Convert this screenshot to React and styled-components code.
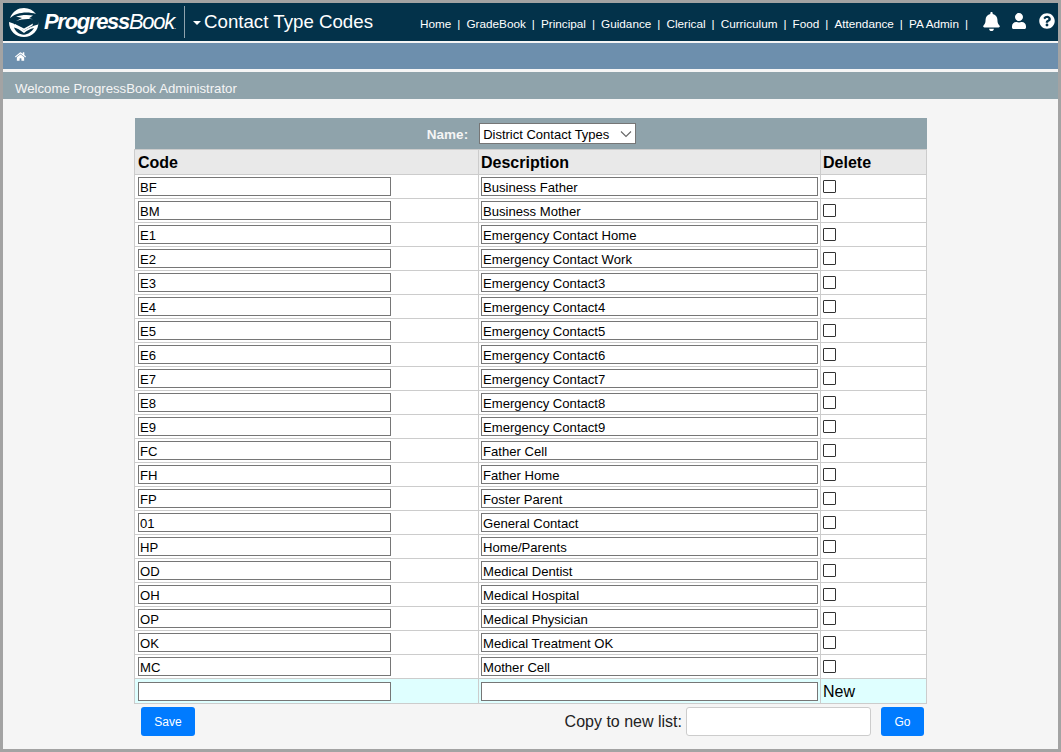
import React from "react";
import styled, { createGlobalStyle } from "styled-components";
import { FaHome, FaBell, FaUser, FaQuestionCircle } from "react-icons/fa";

const Global = createGlobalStyle`
  html, body { margin: 0; padding: 0; }
  body { font-family: "Liberation Sans", Arial, sans-serif; background: #a3a3a3; }
`;

const Frame = styled.div`
  width: 1055px;
  height: 746px;
  border: solid #a3a3a3;
  border-width: 3px;
  background: #f5f5f5;
  display: flex;
  flex-direction: column;
  overflow: hidden;
`;

const TopBar = styled.header`
  height: 38px;
  flex: none;
  background: #03324a;
  display: flex;
  align-items: center;
  color: #fff;
`;

const Logo = styled.div`
  width: 182px;
  flex: none;
  display: flex;
  align-items: center;
  padding-left: 5px;
  box-sizing: border-box;
  border-right: 1px solid #8fa3ae;
  height: 32px;
`;

const Wordmark = styled.span`
  font-size: 22px;
  font-style: italic;
  letter-spacing: -1.3px;
  margin-left: 5px;
  color: #fff;
  white-space: nowrap;
  b { font-weight: 700; }
  span { font-weight: 400; }
  i { font-size: 8px; letter-spacing: 0; font-style: normal; }
`;

const PageTitle = styled.div`
  display: flex;
  align-items: center;
  margin-left: 7px;
  width: 222px;
  flex: none;
  font-size: 18.7px;
  white-space: nowrap;
`;

const Caret = styled.span`
  width: 0;
  height: 0;
  border-left: 4px solid transparent;
  border-right: 4px solid transparent;
  border-top: 4px solid #fff;
  margin: 2px 3px 0 1px;
`;

const Nav = styled.nav`
  display: flex;
  align-items: center;
  font-size: 11.75px;
  flex: none;
  white-space: nowrap;
  margin-top: 3px;
`;

const NavLink = styled.a`
  color: #fff;
  padding: 0 6px;
  display: flex;
  align-items: center;
  &::after {
    content: "|";
    margin-left: 6px;
    margin-right: -6px;
  }
`;

const Icons = styled.div`
  display: flex;
  align-items: center;
  margin-left: 14px;
  gap: 10px;
  margin-top: -2px;
  svg { display: block; }
  svg:last-child { margin-left: 2px; }
`;

const Crumb = styled.div`
  margin-top: 2px;
  height: 26px;
  flex: none;
  background: #6d8fad;
  color: #fff;
  display: flex;
  align-items: center;
  padding-left: 12px;
  font-size: 11px;
`;

const Welcome = styled.div`
  margin-top: 3px;
  height: 27px;
  flex: none;
  background: #8fa3ab;
  color: #f5f5f5;
  font-size: 13.2px;
  display: flex;
  align-items: center;
  padding: 5px 0 0 12px;
  box-sizing: border-box;
`;

const Main = styled.main`
  width: 792px;
  margin: 19px 0 0 132px;
`;

const Table = styled.table`
  width: 792px;
  margin-left: -1px;
  table-layout: fixed;
  border-collapse: collapse;
  font-size: 13px;
`;

const NameRow = styled.th`
  height: 31px;
  padding: 0;
  background: #8fa3ab;
  color: #f5f5f5;
  text-align: center;
  font-size: 13.5px;
  font-weight: 700;
  border-bottom: 1px solid #ccc;
`;

const NameInner = styled.div`
  display: flex;
  align-items: center;
  justify-content: center;
  gap: 11px;
  padding-left: 2px;
`;

const NameLabel = styled.span`
  padding-top: 1px;
`;

const Select = styled.select`
  appearance: none;
  box-sizing: border-box;
  width: 157px;
  height: 21px;
  font-family: "Liberation Sans", Arial, sans-serif;
  font-size: 13px;
  font-weight: 400;
  color: #000;
  border: 1px solid #767676;
  border-radius: 0;
  padding: 1px 0 0 3px;
  background: #fff url("data:image/svg+xml,%3Csvg xmlns='http://www.w3.org/2000/svg' width='12' height='8'%3E%3Cpath d='M1 1.500l5 5 5-5' fill='none' stroke='%23666' stroke-width='1.100'/%3E%3C/svg%3E") no-repeat right 3px center;
`;

const HeadCell = styled.th`
  height: 25px;
  padding: 2px 0 0 ${(p) => (p.$first ? 3 : 2)}px;
  background: #e9e9e9;
  border: 1px solid #ccc;
  text-align: left;
  font-size: 16px;
  font-weight: 700;
  color: #000;
  box-sizing: border-box;
`;

const Cell = styled.td`
  height: ${(p) => (p.$new ? 25 : 24)}px;
  padding: ${(p) => (p.$first ? "0 2px 0 3px" : "0 2px")};
  box-sizing: border-box;
  border: 1px solid #ccc;
  background: ${(p) => (p.$new ? "#dfffff" : "#fff")};
  font-size: 16px;
  vertical-align: middle;
  line-height: 1;
`;

const NewLabel = styled.span`
  display: block;
  padding-top: 2px;
`;

const TextBox = styled.input.attrs({ type: "text" })`
  display: block;
  box-sizing: border-box;
  width: ${(p) => p.$w}px;
  height: 19px;
  margin: 0;
  padding: 1px 1px 0;
  border: 1px solid #767676;
  border-radius: 0;
  background: #fff;
  color: #000;
  font-family: "Liberation Sans", Arial, sans-serif;
  font-size: 13.1px;
`;

const Check = styled.input.attrs({ type: "checkbox" })`
  display: block;
  appearance: none;
  box-sizing: border-box;
  width: 13px;
  height: 13px;
  margin: 0;
  background: #fff;
  border: 1px solid #333;
  border-radius: 1px;
`;

const Footer = styled.div`
  display: flex;
  align-items: center;
  height: 29px;
  margin-top: 3px;
  padding: 0 3px 0 6px;
`;

const Button = styled.button`
  height: 29px;
  width: ${(p) => p.$w}px;
  background: #007bff;
  color: #fff;
  border: 0;
  border-radius: 3px;
  font-family: "Liberation Sans", Arial, sans-serif;
  font-size: 12px;
  padding: 0;
`;

const CopyGroup = styled.div`
  margin-left: auto;
  display: flex;
  align-items: center;
`;

const CopyLabel = styled.label`
  font-size: 16px;
  color: #222;
  margin-right: 4px;
`;

const CopyInput = styled.input.attrs({ type: "text" })`
  width: 185px;
  height: 29px;
  box-sizing: border-box;
  border: 1px solid #ccc;
  border-radius: 3px;
  background: #fff;
  margin-right: 10px;
`;

const LogoMark = () => (
  <svg width="31" height="31" viewBox="0 0 31 31" aria-hidden="true" style={{ flex: "none" }}>
    <path d="M2 11C5 4 10 1 16 1c5 0 9 2 12 6-6-2-13-2-19 0-3 1-5 2.500-7 4z" fill="#fff" />
    <path d="M8 9.500c5-1.800 12-2 17-1l-4 2.800 4 1c-6-.8-12-.3-17 1.700l6-3z" fill="#fff" />
    <path d="M1 15c3 .8 6 2 8 4l7 4.500c4-2.500 8-4.500 14-6l.3-3C31 24 24 30 16 30 8 30 1 24 1 15z" fill="#fff" />
    <path d="M6 20.500c3 .5 6 2.500 10 5.500 3-2.500 6-4 10-5-2 3.500-6 6.500-10 6.800-5-.3-8.500-3.300-10-7.300z" fill="#03324a" />
    <path d="M7 17l9 4.500 9-5-.5 2L16 23.500 7 19z" fill="#fff" />
  </svg>
);

const rows = [
  ["BF", "Business Father"],
  ["BM", "Business Mother"],
  ["E1", "Emergency Contact Home"],
  ["E2", "Emergency Contact Work"],
  ["E3", "Emergency Contact3"],
  ["E4", "Emergency Contact4"],
  ["E5", "Emergency Contact5"],
  ["E6", "Emergency Contact6"],
  ["E7", "Emergency Contact7"],
  ["E8", "Emergency Contact8"],
  ["E9", "Emergency Contact9"],
  ["FC", "Father Cell"],
  ["FH", "Father Home"],
  ["FP", "Foster Parent"],
  ["01", "General Contact"],
  ["HP", "Home/Parents"],
  ["OD", "Medical Dentist"],
  ["OH", "Medical Hospital"],
  ["OP", "Medical Physician"],
  ["OK", "Medical Treatment OK"],
  ["MC", "Mother Cell"],
];

const links = ["Home", "GradeBook", "Principal", "Guidance", "Clerical", "Curriculum", "Food", "Attendance", "PA Admin"];

export default function App() {
  return (
    <>
      <Global />
      <Frame>
        <TopBar>
          <Logo>
            <LogoMark />
            <Wordmark>
              <b>Progress</b>
              <span>Book</span>
              <i>.</i>
            </Wordmark>
          </Logo>
          <PageTitle>
            <Caret />
            Contact Type Codes
          </PageTitle>
          <Nav>
            {links.map((l) => (
              <NavLink key={l}>{l}</NavLink>
            ))}
          </Nav>
          <Icons>
            <FaBell size={19} />
            <FaUser size={16} />
            <FaQuestionCircle size={16} />
          </Icons>
        </TopBar>
        <Crumb>
          <FaHome />
        </Crumb>
        <Welcome>Welcome ProgressBook Administrator</Welcome>
        <Main>
          <Table>
            <colgroup>
              <col style={{ width: 344 }} />
              <col style={{ width: 342 }} />
              <col style={{ width: 106 }} />
            </colgroup>
            <thead>
              <tr>
                <NameRow colSpan={3}>
                  <NameInner>
                    <NameLabel>Name:</NameLabel>
                    <Select defaultValue="d">
                      <option value="d">District Contact Types</option>
                    </Select>
                  </NameInner>
                </NameRow>
              </tr>
              <tr>
                <HeadCell $first>Code</HeadCell>
                <HeadCell>Description</HeadCell>
                <HeadCell>Delete</HeadCell>
              </tr>
            </thead>
            <tbody>
              {rows.map(([c, d]) => (
                <tr key={c}>
                  <Cell $first>
                    <TextBox $w={253} defaultValue={c} />
                  </Cell>
                  <Cell>
                    <TextBox $w={337} defaultValue={d} />
                  </Cell>
                  <Cell>
                    <Check />
                  </Cell>
                </tr>
              ))}
              <tr>
                <Cell $new $first>
                  <TextBox $w={253} />
                </Cell>
                <Cell $new>
                  <TextBox $w={337} />
                </Cell>
                <Cell $new>
                  <NewLabel>New</NewLabel>
                </Cell>
              </tr>
            </tbody>
          </Table>
          <Footer>
            <Button $w={54}>Save</Button>
            <CopyGroup>
              <CopyLabel>Copy to new list:</CopyLabel>
              <CopyInput />
              <Button $w={43}>Go</Button>
            </CopyGroup>
          </Footer>
        </Main>
      </Frame>
    </>
  );
}
